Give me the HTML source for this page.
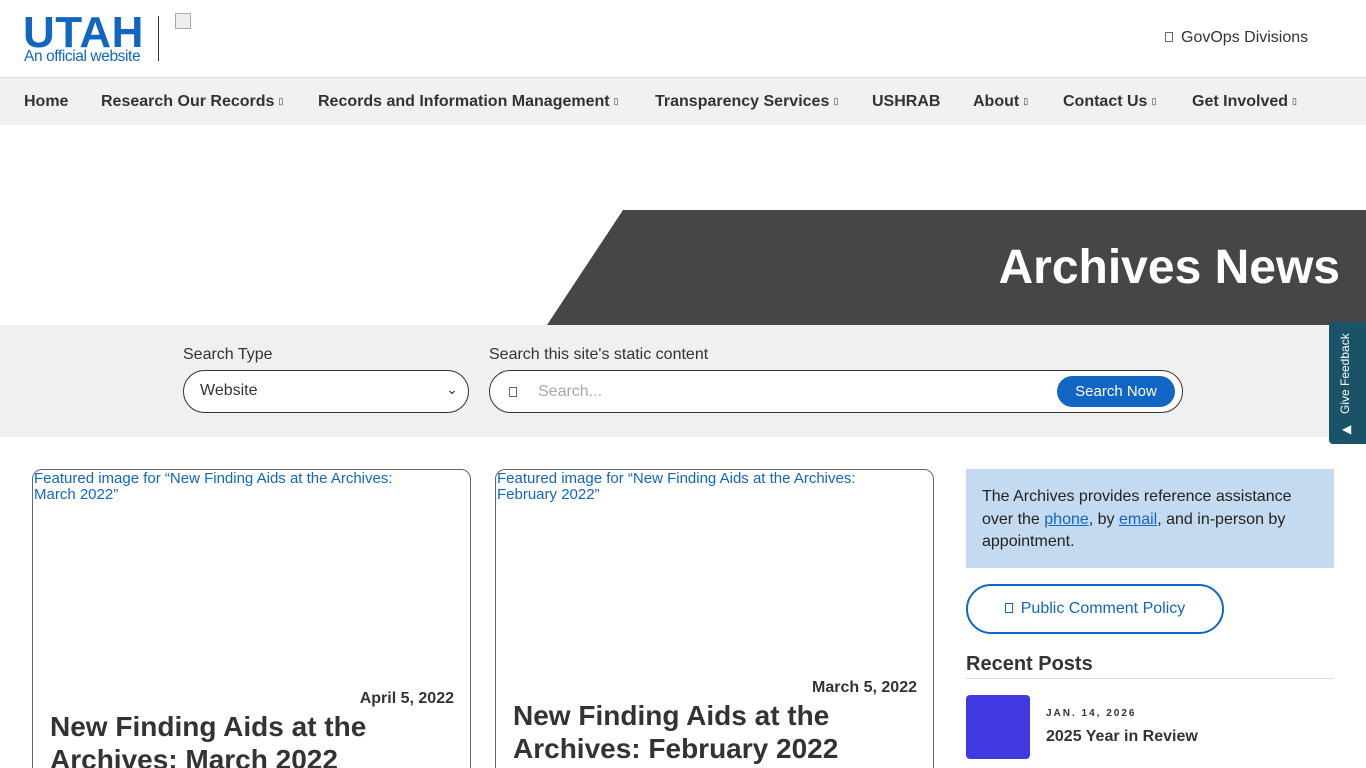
<!DOCTYPE html>
<html style="overflow:hidden;height:768px"><head><meta charset="utf-8"><style>
*{box-sizing:border-box;margin:0;padding:0}
body{width:1366px;height:768px;overflow:hidden;font-family:"Liberation Sans",Arial,sans-serif;background:#fff;color:#333;position:relative}
.abs{position:absolute}
.nav{top:77px;left:0;width:1366px;height:48px;background:#f1f1f1;border-top:1px solid #ddd}
.nav span{position:absolute;top:15px;font-weight:bold;font-size:16px;color:#333;white-space:nowrap}
.nav small{font-size:9px;font-weight:normal;margin-left:4px;vertical-align:2px}
.box{display:inline-block;width:8px;height:10px;border:1px solid #666}
</style></head><body>
<div class="abs" style="left:23px;top:8px;font-size:44px;font-weight:bold;color:#1166c4;letter-spacing:0.5px">UTAH</div>
<div class="abs" style="left:24px;top:48px;width:118px;overflow:hidden;white-space:nowrap;font-size:15.5px;letter-spacing:-0.4px;color:#1166c4">An official website</div>
<div class="abs" style="left:158px;top:16px;width:1px;height:45px;background:#333"></div>
<div class="abs" style="left:175px;top:13px;width:16px;height:16px;border:1px solid #aaa;background:#eee"></div>
<div class="abs" style="left:1165px;top:29px;font-size:16px;color:#333"><span class="box" style="margin-right:8px"></span>GovOps Divisions</div>
<div class="abs nav">
<span style="left:24px">Home</span>
<span style="left:101px">Research Our Records<small>▯</small></span>
<span style="left:318px">Records and Information Management<small>▯</small></span>
<span style="left:655px">Transparency Services<small>▯</small></span>
<span style="left:872px">USHRAB</span>
<span style="left:973px">About<small>▯</small></span>
<span style="left:1063px">Contact Us<small>▯</small></span>
<span style="left:1192px">Get Involved<small>▯</small></span>
</div>
<svg class="abs" style="left:0;top:210px" width="1366" height="115"><polygon points="623,0 1366,0 1366,115 547,115" fill="#464646"/></svg>
<div class="abs" style="right:26px;top:240px;font-size:48px;font-weight:bold;color:#fff">Archives News</div>
<div class="abs" style="left:0;top:325px;width:1366px;height:112px;background:#f0f0f0"></div>
<div class="abs" style="left:183px;top:346px;font-size:16px">Search Type</div>
<div class="abs" style="left:183px;top:370px;width:286px;height:43px;border:1px solid #333;border-radius:22px;background:#fff;font-size:16px;padding:11px 16px">Website<span style="position:absolute;right:10px;top:10px;font-size:14px">⌄</span></div>
<div class="abs" style="left:489px;top:346px;font-size:16px">Search this site's static content</div>
<div class="abs" style="left:489px;top:370px;width:694px;height:43px;border:1px solid #333;border-radius:22px;background:#fff"><span class="box" style="position:absolute;left:19px;top:16px"></span><span style="position:absolute;left:48px;top:12px;color:#aaa;font-size:16px">Search...</span>
<div style="position:absolute;right:7px;top:5px;width:118px;height:31px;background:#1166c4;border-radius:16px;color:#fff;font-size:15px;text-align:center;line-height:31px">Search Now</div></div>
<div class="abs" style="left:1329px;top:322px;width:37px;height:122px;background:#1a5368;border-radius:4px 0 0 4px"><div style="position:absolute;left:9px;top:92px;transform:rotate(-90deg);transform-origin:0 0;color:#fff;font-size:12px;white-space:nowrap">Give Feedback</div><div style="position:absolute;left:13px;top:100px;color:#fff;font-size:12px">◀</div></div>
<div class="abs" style="left:32px;top:469px;width:439px;height:320px;border:1px solid #666;border-radius:10px"><div style="padding:1px 60px 1px 1px;color:#1166c4;font-size:15px;line-height:16px">Featured image for “New Finding Aids at the Archives: March 2022”</div>
<div style="position:absolute;right:16px;top:220px;font-weight:bold;font-size:16px">April 5, 2022</div>
<div style="position:absolute;left:17px;top:240px;font-weight:bold;font-size:28px;line-height:33px">New Finding Aids at the Archives: March 2022</div></div>
<div class="abs" style="left:495px;top:469px;width:439px;height:320px;border:1px solid #666;border-radius:10px"><div style="padding:1px 30px 1px 1px;color:#1166c4;font-size:15px;line-height:16px">Featured image for “New Finding Aids at the Archives: February 2022”</div>
<div style="position:absolute;right:16px;top:209px;font-weight:bold;font-size:16px">March 5, 2022</div>
<div style="position:absolute;left:17px;top:229px;font-weight:bold;font-size:28px;line-height:33px">New Finding Aids at the Archives: February 2022</div></div>
<div class="abs" style="left:966px;top:469px;width:368px;height:99px;background:#c4daf0;padding:17px 16px;font-size:16px;line-height:22.5px;color:#222">The Archives provides reference assistance over the <u style="color:#1166c4">phone</u>, by <u style="color:#1166c4">email</u>, and in-person by appointment.</div>
<div class="abs" style="left:966px;top:584px;width:258px;height:50px;border:2px solid #1166c4;border-radius:25px;color:#1166c4;font-size:16px;text-align:center;line-height:46px"><span class="box" style="border-color:#1166c4;margin-right:8px"></span>Public Comment Policy</div>
<div class="abs" style="left:966px;top:653px;font-size:20px;font-weight:bold">Recent Posts</div>
<div class="abs" style="left:966px;top:678px;width:368px;height:1px;background:#ddd"></div>
<div class="abs" style="left:966px;top:695px;width:64px;height:64px;background:#4038e0;border-radius:4px"></div>
<div class="abs" style="left:1046px;top:708px;font-size:10px;font-weight:bold;letter-spacing:2px">JAN. 14, 2026</div>
<div class="abs" style="left:1046px;top:728px;font-size:16px;font-weight:bold">2025 Year in Review</div>
</body></html>
